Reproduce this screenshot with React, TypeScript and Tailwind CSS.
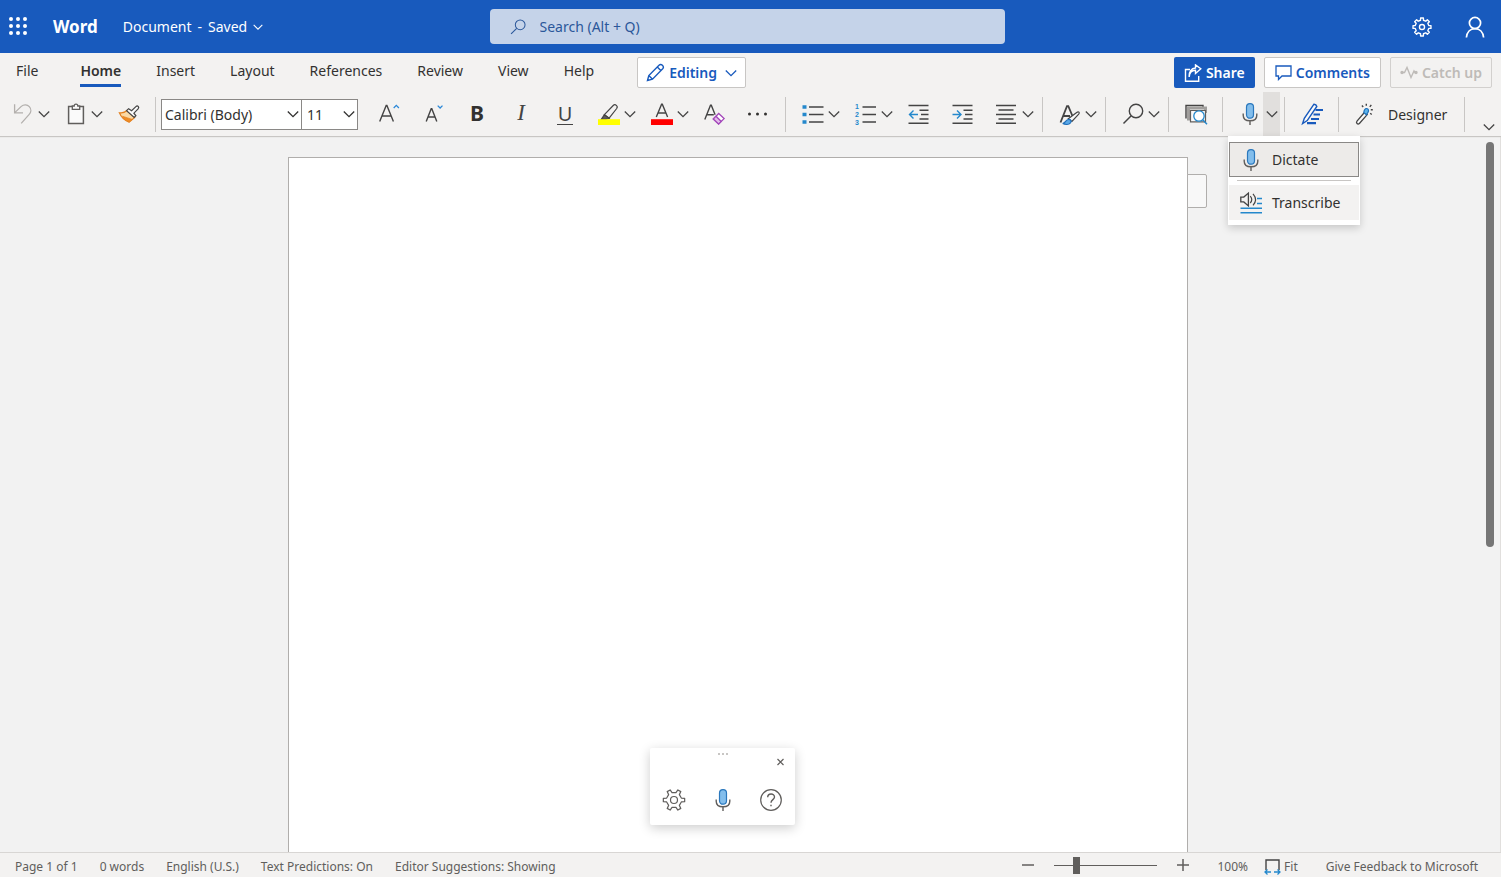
import React from 'react';

type IconProps = { children: React.ReactNode; size?: number };

// Shared wrapper, every ribbon icon is drawn on a 22px grid
const Icon: React.FC<IconProps> = ({ children, size = 22 }) => (
  <svg width={size} height={size} viewBox="0 0 22 22" fill="none" stroke="#444" strokeWidth="1.2" aria-hidden="true" className="shrink-0 overflow-visible">
    {children}
  </svg>
);

const Chevron: React.FC<{ size?: number }> = ({ size = 12 }) => (
  <svg width={size} height={size} viewBox="0 0 12 12" fill="none" stroke="currentColor" strokeWidth="1.3" aria-hidden="true" className="shrink-0">
    <path d="M.8 3.5 6 8.7l5.2-5.2" />
  </svg>
);

const MicIcon = () => (
  <Icon>
    <rect x="7.5" y="0.6" width="7" height="14.6" rx="3.4" fill="#83beec" stroke="#2b78bd" />
    <path d="M4.2 10.5v1.7c0 3.4 2.6 5.6 6.8 5.6s6.8-2.2 6.8-5.6v-1.7M11 17.8V22" stroke="#605e5c" strokeWidth="1.4" />
  </Icon>
);

const UndoIcon = () => (
  <Icon>
    <path d="M2.6 1.2v8.6h8.4M2.8 9.6 9.3 3.4c2.5-2.3 6-2 8 .2 2.2 2.4 2 5.7-.3 8L9.2 20.4" stroke="#b3b0ad" strokeWidth="1.3" />
  </Icon>
);

const PasteIcon = () => (
  <Icon>
    <path d="M7.3 3.4H3.6v17.2h14.8V3.4h-3.7" stroke="#605e5c" strokeWidth="1.5" fill="#fafafa" />
    <path d="M7.3 6.4V3h1.9c0-2.6 3.6-2.6 3.6 0h1.9v3.4z" stroke="#605e5c" strokeWidth="1.3" fill="#fafafa" />
  </Icon>
);

const FormatPainterIcon = () => (
  <Icon>
    <path d="M1.4 9.8c3.2.6 5.8-.5 7.9-2.5l7.4 7.2-5.5 4.6C7 17.6 3.4 14.8 1.4 9.8z" fill="#fbd9a5" stroke="#e3801f" />
    <path d="m4.5 13.2 9.8 3.2-3.1 2.7c-3-1.1-5.2-3-6.7-5.9z" fill="#f08c25" stroke="#e3801f" strokeWidth=".6" />
    <path d="m8.6 7.7 2-2 3 2.1 4.3-4.2c1.7-1.6 3.8.5 2.2 2.2l-4.2 4.4 2 2.6-1.7 1.7z" fill="#fafafa" />
  </Icon>
);

const GrowFontIcon = () => (
  <Icon>
    <path d="m1.7 18.5 6.5-16h.7l6.5 16M4 13h9" strokeWidth="1.4" />
    <path d="m15.7 5 2.6-2.6L20.9 5" stroke="#2b88d8" strokeWidth="1.3" />
  </Icon>
);

const ShrinkFontIcon = () => (
  <Icon>
    <path d="m4.2 18.500 5-12.800h.6l5 12.800M6 14h7" strokeWidth="1.4" />
    <path d="m15.7 2.600 2.400 2.400 2.400-2.400" stroke="#2b88d8" strokeWidth="1.3" />
  </Icon>
);

const HighlightIcon = () => (
  <Icon>
    <path d="m6.4 11.7 8.8-9.2c2-2 5.2.6 3.5 3l-7.6 9.7z" />
    <path d="m6.4 11.7 4.7 3.5-3.4 1.1H3.3z" fill="#605e5c" />
    <path d="M0 16.2h22V22H0z" fill="#ff0" stroke="none" />
  </Icon>
);

const FontColorIcon = () => (
  <Icon>
    <path d="m5.3 14 5.3-12.8h.7L16.6 14M7.2 10h7.6" strokeWidth="1.4" />
    <path d="M0 16.2h22V22H0z" fill="red" stroke="none" />
  </Icon>
);

const ClearFormatIcon = () => (
  <Icon>
    <path d="M.8 16.6 6.500 2.200h.8l3.800 9.600M2.800 11.800h7" strokeWidth="1.4" />
    <path d="m9.3 16 5.400-5.500 5.400 5.100-5.500 5.400z" fill="#fff" stroke="#a347ba" strokeWidth="1.3" />
    <path d="m11.9 13.300 5.300 5.200" stroke="#a347ba" strokeWidth="1.3" />
    <path d="m11.9 13.300 5.300 5.200-2.600 2.500-5.300-5z" fill="#e3bdeb" stroke="none" />
    <path d="m9.3 16 5.300 5 2.600-2.500-5.300-5.200z" stroke="#a347ba" strokeWidth="1.1" />
  </Icon>
);

const BulletsIcon = () => (
  <Icon>
    <path d="M7 4h14.500M7 11.500h14.500M7 19h14.500" strokeWidth="1.4" />
    <path d="M.5 2.200h4v3.600h-4zM.5 9.700h4v3.600h-4zM.5 17.200h4v3.600h-4z" fill="#2488cc" stroke="none" />
  </Icon>
);

const NumberingIcon = () => (
  <Icon>
    <path d="M7.500 4H21M7.500 11.500H21M7.500 19H21" strokeWidth="1.4" />
    <g fill="#2488cc" stroke="none" fontSize="7" fontWeight="700" fontFamily="Liberation Sans, sans-serif">
      <text x="0" y="6">1</text>
      <text x="0" y="14">2</text>
      <text x="0" y="22">3</text>
    </g>
  </Icon>
);

const IndentIcon: React.FC<{ outdent?: boolean }> = ({ outdent }) => (
  <Icon>
    <path d="M.5 2.500h20M11.500 7.300h9M13 11.500h7.500M11.500 16h9M.5 20.300h20" strokeWidth="1.4" />
    {outdent
      ? <path d="M10 11.500H1.500M5.500 7.500l-4 4 4 4" stroke="#2488cc" strokeWidth="1.4" />
      : <path d="M.5 11.500H9M5 7.500l4 4-4 4" stroke="#2488cc" strokeWidth="1.4" />}
  </Icon>
);

const AlignIcon = () => (
  <Icon>
    <path d="M0 2.500h20M2.500 7h15M0 11.500h20M2.500 16h15M0 20.300h20" strokeWidth="1.4" />
  </Icon>
);

const StylesIcon = () => (
  <Icon>
    <path d="M1.5 19.5 8 3.2h1.3l4.4 10.3M4 13h7" strokeWidth="1.8" />
    <path d="m9.3 15.8 8.4-6.4c2-1.4 3.3.3 2 1.8l-6.8 7.2z" fill="#fafafa" />
    <path d="M3.700 20.400c2.600.2 2.600-3.400 5.600-3.900 2.400-.3 3.600 1.600 2.200 3.300-1.700 1.900-5.200 2-7.800.6z" fill="#5aa7e6" stroke="#1e6fba" />
  </Icon>
);

const SearchIcon: React.FC<{ size?: number; stroke?: string }> = ({ size, stroke = '#444' }) => (
  <Icon size={size}>
    <circle cx="14" cy="8" r="6.7" stroke={stroke} strokeWidth="1.4" />
    <path d="M9.2 12.800 1.500 20.500" stroke={stroke} strokeWidth="1.5" />
  </Icon>
);

const ReuseIcon = () => (
  <Icon>
    <path d="M1 15.500V2.500h17v2" strokeWidth="1.4" />
    <path d="M3.500 17.500V5h17v5" stroke="#a19f9d" strokeWidth="3" />
    <path d="M5.500 7.500h15v11.300h-15z" fill="#fafafa" stroke="#605e5c" />
    <circle cx="14" cy="13" r="5.200" fill="#fff" stroke="#2488cc" strokeWidth="1.3" />
    <path d="m17.800 16.800 4.200 4.400" stroke="#2488cc" strokeWidth="1.5" />
  </Icon>
);

const EditorIcon = () => (
  <Icon>
    <path d="M13 1.200 3.300 15.400l-1.700 5.100 4.600-2.900L15.800 3.500c-.3-1.300-1.400-2.200-2.800-2.300z" fill="#fafafa" stroke="#185abd" strokeWidth="1.4" />
    <path d="M14.500 7h7.500M12.500 11.500h6.500M10 16h8M6 20.200h9" stroke="#185abd" strokeWidth="2.200" />
  </Icon>
);

const WandIcon = () => (
  <Icon>
    <path d="m10.600 9.300 2.600 2.300-7.800 8.900c-1.700 1.400-3.800-.6-2.400-2.300z" fill="#fafafa" strokeWidth="1.3" />
    <path d="M9.800 9.600c.3-2.600 1-4.200 2.800-4.100 2 .2 2.400 2.400 1.400 3.800l-1.600 2.500z" fill="#5db4ea" stroke="#1e6fba" />
    <path d="M12.300.8v2M7.900 2.500l1.300 1.400M17.300 1.800l-1.500 2M16.800 6.800h2M16.200 10.300l1.500 1.200" strokeWidth="1.4" />
  </Icon>
);

const TranscribeIcon = () => (
  <Icon>
    <path d="M.8 5.100h3l4.600-4v12.800l-4.600-4h-3z" strokeWidth="1.3" />
    <path d="M10.300 4.200c1.700 2 1.700 4.800 0 6.800M13 1.800c3.100 3.500 3.100 8 0 11.600" />
    <path d="M17 6.500h5M17 11.500h5M.5 16.200H22M.5 20.800H22" stroke="#2488cc" strokeWidth="1.4" />
  </Icon>
);

// Outline of a cog centred on the icon grid
const cog = (teeth: number, outer: number, inner: number, tip: number, root: number) => {
  const points: string[] = [];
  for (let i = 0; i < teeth; i++) {
    const mid = (360 / teeth) * i;
    [[-root, inner], [-tip, outer], [tip, outer], [root, inner]].forEach(([offset, radius]) => {
      const angle = ((mid + offset) * Math.PI) / 180;
      points.push(`${(11 + radius * Math.cos(angle)).toFixed(2)},${(11 + radius * Math.sin(angle)).toFixed(2)}`);
    });
  }
  return points.join(' ');
};

const SettingsIcon = () => (
  <Icon>
    <polygon points={cog(6, 10.8, 7.6, 9, 15)} strokeLinejoin="round" stroke="#605e5c" />
    <circle cx="11" cy="11" r="3.5" stroke="#605e5c" />
  </Icon>
);

const GearIcon = () => (
  <Icon size={20}>
    <polygon points={cog(8, 10, 7.6, 9, 12)} strokeLinejoin="round" stroke="#fff" strokeWidth="1.5" />
    <circle cx="11" cy="11" r="2.8" stroke="#fff" strokeWidth="1.5" />
  </Icon>
);

const ToolButton: React.FC<{ label: string; children: React.ReactNode }> = ({ label, children }) => (
  <button aria-label={label} className="flex w-11 shrink-0 items-center justify-center">{children}</button>
);

const SplitButton: React.FC<{ label: string; children: React.ReactNode }> = ({ label, children }) => (
  <div className="flex shrink-0 pl-[11px] text-[#444]">
    <button aria-label={label} className="flex w-[22px] items-center justify-center">{children}</button>
    <button aria-label={`${label} options`} className="flex w-5 items-center justify-center">
      <Chevron />
    </button>
  </div>
);

const Divider = () => <div className="mr-[5px] ml-1 h-[35px] w-px shrink-0 self-center bg-[#c8c6c4]" />;

const tabs = ['Insert', 'Layout', 'References', 'Review', 'View', 'Help'];

const TitleBar = () => (
  <header className="flex h-[53px] shrink-0 items-center bg-[#185abd] text-white">
    <div className="flex flex-1 items-center pl-2">
      <button aria-label="App launcher">
        <svg width="20" height="20" viewBox="0 0 20 20" fill="#fff" aria-hidden="true">
          {[3, 10, 17].map(y => [3, 10, 17].map(x => <circle key={`${x}-${y}`} cx={x} cy={y - 1} r="2" />))}
        </svg>
      </button>
      <h1 className="ml-[25px] text-[17px] font-bold">Word</h1>
      <button className="ml-[25px] flex items-center gap-1.5 text-sm">
        <span>Document</span>
        <span>-</span>
        <span>Saved</span>
        <Chevron size={10} />
      </button>
    </div>
    <label className="flex h-[35px] w-[515px] items-center gap-3.5 rounded bg-[#c5d3e9] px-5">
      <SearchIcon size={16} stroke="#2b579a" />
      <input
        type="search"
        aria-label="Search"
        placeholder="Search (Alt + Q)"
        className="min-w-0 flex-1 bg-transparent text-sm text-[#2b579a] outline-none placeholder:text-[#2b579a]"
      />
    </label>
    <div className="flex flex-1 items-center justify-end gap-8 pr-[15px]">
      <button aria-label="Settings"><GearIcon /></button>
      <button aria-label="Account">
        <Icon>
          <circle cx="11" cy="7" r="5.6" stroke="#fff" strokeWidth="1.7" />
          <path d="M2.400 21.500c.5-5.400 3.800-8.900 8.600-8.900s8.100 3.500 8.600 8.900" stroke="#fff" strokeWidth="1.7" />
        </Icon>
      </button>
    </div>
  </header>
);

const TabRow = () => (
  <div className="flex h-[39px] items-start pt-1 pr-[9px] pl-4">
    <nav className="flex gap-[35px] text-sm leading-[27px]">
      <button className="mr-[7px] h-[30px] pb-[3px]">File</button>
      <button className="h-[30px] border-b-3 border-[#185abd] font-semibold">Home</button>
      {tabs.map(tab => (
        <button key={tab} className="h-[30px] pb-[3px]">{tab}</button>
      ))}
    </nav>
    <button className="ml-[43px] flex h-[31px] items-center gap-1 rounded-xs border border-[#c8c6c4] bg-white px-2 text-sm font-semibold text-[#185abd]">
      <svg width="19" height="19" viewBox="0 0 19 19" fill="none" stroke="currentColor" strokeWidth="1.4" aria-hidden="true">
        <path d="m1.500 17.500 1.300-5L13 2.200c2.200-2 5.700 1.200 3.700 3.500L6.500 16.200zM11.300 4l3.700 3.700M2.800 12.500l3.700 3.700" />
      </svg>
      Editing
      <span className="ml-1 flex"><Chevron /></span>
    </button>
    <div className="ml-auto flex gap-[9px] text-sm font-semibold">
      <button className="flex h-[31px] items-center gap-1 rounded-xs bg-[#185abd] px-2.5 text-white">
        <svg width="18" height="18" viewBox="0 0 18 18" fill="none" stroke="currentColor" strokeWidth="1.4" aria-hidden="true">
          <path d="M6 5.500H1.500v11.700h13.200V12M5.200 13c.2-4.300 2.700-6.600 6.300-6.700v3.200l5.300-4.700L11.500.9V4C7.300 4.300 4.800 7.500 5.200 13z" />
        </svg>
        Share
      </button>
      <button className="flex h-[31px] items-center gap-1 rounded-xs border border-[#c8c6c4] bg-white px-2.5 text-[#185abd]">
        <svg width="17" height="17" viewBox="0 0 17 17" fill="none" stroke="currentColor" strokeWidth="1.3" aria-hidden="true">
          <path d="M1 2h15v10H7l-3.500 3.500V12H1z" />
        </svg>
        Comments
      </button>
      <button disabled className="flex h-[31px] items-center gap-1 rounded-xs border border-[#d2d0ce] px-[9px] text-[#bebbb8]">
        <svg width="18" height="16" viewBox="0 0 18 16" fill="none" stroke="currentColor" strokeWidth="1.4" aria-hidden="true">
          <path d="M2 7.500h2.500L7 2.500l4 10 3-6.500 1 1.500h1" />
          <circle cx="2" cy="7.5" r="1" fill="currentColor" />
          <circle cx="16" cy="7.5" r="1" fill="currentColor" />
        </svg>
        Catch up
      </button>
    </div>
  </div>
);

const DictateMenu = () => (
  <div role="menu" className="absolute top-full left-0 z-10 w-[132px] bg-white px-px pt-1.5 pb-[5px] text-sm shadow-[0_3px_8px_rgba(0,0,0,0.18)]">
    <button role="menuitem" className="flex h-[35px] w-full items-center gap-2.5 border border-[#8a8886] bg-[#edebe9] pl-2.5">
      <MicIcon />
      Dictate
    </button>
    <hr className="mx-2 mt-[3px] mb-1 border-[#c8c6c4]" />
    <button role="menuitem" className="flex h-[35px] w-full items-center gap-2.5 bg-[#f3f2f1] pl-[11px]">
      <TranscribeIcon />
      Transcribe
    </button>
  </div>
);

const Toolbar = () => (
  <div className="flex h-11 pl-px">
    <SplitButton label="Undo"><UndoIcon /></SplitButton>
    <SplitButton label="Paste"><PasteIcon /></SplitButton>
    <ToolButton label="Format painter"><FormatPainterIcon /></ToolButton>
    <Divider />
    <div className="mr-[9px] flex items-center text-sm">
      <div className="relative">
        <select aria-label="Font" className="h-[31px] w-[141px] appearance-none border border-[#8a8886] bg-white pt-0.5 pl-[3px]">
          <option>Calibri (Body)</option>
        </select>
        <span className="pointer-events-none absolute top-[9px] right-[3px]"><Chevron /></span>
      </div>
      <div className="relative">
        <select aria-label="Font size" className="h-[31px] w-14 appearance-none border border-l-0 border-[#8a8886] bg-white pt-0.5 pl-[5px]">
          <option>11</option>
        </select>
        <span className="pointer-events-none absolute top-[9px] right-[3px]"><Chevron /></span>
      </div>
    </div>
    <ToolButton label="Grow font"><GrowFontIcon /></ToolButton>
    <ToolButton label="Shrink font"><ShrinkFontIcon /></ToolButton>
    <ToolButton label="Bold"><span className="pb-0.5 text-[21px] leading-[22px] font-bold">B</span></ToolButton>
    <ToolButton label="Italic"><span className="pb-0.5 font-['Liberation_Serif',serif] text-[23px] leading-[22px] text-[#444] italic">I</span></ToolButton>
    <ToolButton label="Underline"><span className="border-b border-[#444] px-px text-[20px] leading-5 text-[#444]">U</span></ToolButton>
    <SplitButton label="Highlight"><HighlightIcon /></SplitButton>
    <SplitButton label="Font color"><FontColorIcon /></SplitButton>
    <ToolButton label="Clear formatting"><ClearFormatIcon /></ToolButton>
    <ToolButton label="More font options">
      <Icon>
        <path d="M0 11a1.500 1.500 0 1 0 3 0 1.500 1.500 0 1 0-3 0M8 11a1.500 1.500 0 1 0 3 0 1.500 1.500 0 1 0-3 0M16 11a1.500 1.500 0 1 0 3 0 1.500 1.500 0 1 0-3 0" fill="#323130" stroke="none" />
      </Icon>
    </ToolButton>
    <Divider />
    <SplitButton label="Bullets"><BulletsIcon /></SplitButton>
    <SplitButton label="Numbering"><NumberingIcon /></SplitButton>
    <ToolButton label="Decrease indent"><IndentIcon outdent /></ToolButton>
    <ToolButton label="Increase indent"><IndentIcon /></ToolButton>
    <SplitButton label="Alignment"><AlignIcon /></SplitButton>
    <Divider />
    <SplitButton label="Styles"><StylesIcon /></SplitButton>
    <Divider />
    <SplitButton label="Find"><SearchIcon /></SplitButton>
    <Divider />
    <ToolButton label="Reuse files"><ReuseIcon /></ToolButton>
    <Divider />
    <div className="relative flex gap-0.5 pl-[11px]">
      <button aria-label="Dictate" className="flex w-[22px] items-center"><MicIcon /></button>
      <button aria-label="Dictate options" aria-expanded="true" className="flex w-[17px] items-center justify-center bg-[#e1dfdd] text-[#444]">
        <Chevron />
      </button>
      <DictateMenu />
    </div>
    <Divider />
    <ToolButton label="Editor"><EditorIcon /></ToolButton>
    <Divider />
    <button className="mr-[13px] flex shrink-0 items-center gap-3 pl-2.5 text-sm">
      <WandIcon />
      <span className="pt-0.5">Designer</span>
    </button>
    <Divider />
    <button aria-label="Ribbon display options" className="mr-1.5 ml-auto flex items-end pb-[3px] text-[#444]">
      <Chevron />
    </button>
  </div>
);

const DictationPanel = () => (
  <section aria-label="Dictation" className="absolute bottom-[27px] left-[650px] w-[145px] rounded-xs bg-white pb-3.5 shadow-[0_3px_12px_rgba(0,0,0,0.2)]">
    <div className="flex h-[41px] flex-col items-center pt-1">
      <svg width="12" height="4" viewBox="0 0 12 4" fill="#c8c6c4" aria-hidden="true">
        <path d="M1 1h2v2H1zM5 1h2v2H5zM9 1h2v2H9z" />
      </svg>
      <button aria-label="Close" className="mr-2.5 self-end">
        <svg width="9" height="11" viewBox="0 0 9 11" fill="none" stroke="#605e5c" strokeWidth="1.2" aria-hidden="true">
          <path d="m1.500 3 6 6M7.500 3l-6 6" />
        </svg>
      </button>
    </div>
    <div className="flex justify-between px-[13px]">
      <button aria-label="Dictation settings"><SettingsIcon /></button>
      <button aria-label="Toggle microphone"><MicIcon /></button>
      <button aria-label="Help">
        <Icon>
          <circle cx="11" cy="11" r="10.3" stroke="#605e5c" />
          <path d="M7.700 8.300c0-4.400 6.800-4.300 6.800-.3 0 2.600-3.500 2.700-3.500 5.800M11 15.700v1.600" stroke="#605e5c" strokeWidth="1.4" />
        </Icon>
      </button>
    </div>
  </section>
);

const StatusBar = () => (
  <footer className="flex h-[25px] shrink-0 items-center justify-between border-t border-[#d8d6d4] bg-[#f3f2f1] pt-1 pr-[23px] pl-[15px] text-xs text-[#605e5c]">
    <div className="flex gap-[22px]">
      <button>Page 1 of 1</button>
      <button>0 words</button>
      <button>English (U.S.)</button>
      <button>Text Predictions: On</button>
      <button>Editor Suggestions: Showing</button>
    </div>
    <div className="flex items-center">
      <div className="flex items-center pb-1">
        <button aria-label="Zoom out">
          <svg width="12" height="12" viewBox="0 0 12 12" stroke="#605e5c" strokeWidth="1.5" aria-hidden="true"><path d="M0 6h12" /></svg>
        </button>
        <input
          type="range"
          aria-label="Zoom"
          defaultValue={20}
          className="mx-5 h-[18px] w-[103px] appearance-none bg-transparent [&::-webkit-slider-runnable-track]:h-px [&::-webkit-slider-runnable-track]:bg-[#605e5c] [&::-webkit-slider-thumb]:mt-[-8px] [&::-webkit-slider-thumb]:h-[17px] [&::-webkit-slider-thumb]:w-[7px] [&::-webkit-slider-thumb]:appearance-none [&::-webkit-slider-thumb]:bg-[#605e5c]"
        />
        <button aria-label="Zoom in">
          <svg width="12" height="12" viewBox="0 0 12 12" stroke="#605e5c" strokeWidth="1.5" aria-hidden="true"><path d="M0 6h12M6 0v12" /></svg>
        </button>
      </div>
      <button className="ml-[29px]">100%</button>
      <button className="ml-4 flex items-center gap-[3px]">
        <svg width="17" height="17" viewBox="0 0 17 17" fill="none" aria-hidden="true">
          <path d="M2 11V1h13v10" stroke="#444" strokeWidth="1.4" />
          <path d="M7 13H1M3.500 10.500 1 13l2.500 2.500M10 13h6M13.500 10.500 16 13l-2.500 2.500" stroke="#2488cc" strokeWidth="1.3" />
        </svg>
        Fit
      </button>
      <a href="#feedback" className="ml-7">Give Feedback to Microsoft</a>
    </div>
  </footer>
);

const App: React.FC = () => (
  <div className="flex h-screen flex-col overflow-hidden bg-[#f2f2f2] font-['Noto_Sans','Open_Sans',sans-serif] text-[#323130]">
    <TitleBar />
    <div className="relative z-10 shrink-0 bg-[#f3f2f1] shadow-[0_1px_1px_#c8c6c4]">
      <TabRow />
      <Toolbar />
    </div>

    {/* Document canvas */}
    <main className="relative flex min-h-0 flex-1">
      <div className="flex flex-1 justify-center pt-[21px]">
        <div className="relative w-[900px] border border-b-0 border-[#b0aeac] bg-white">
          <div className="absolute top-4 left-full h-[34px] w-5 rounded-r-xs border border-[#b0aeac] bg-[#f8f8f8]" />
        </div>
      </div>
      <div className="w-[25px] border-r border-[#e1dfdd] pt-1.5 pl-2.5">
        <div className="h-[57%] w-2 rounded-full bg-[#767676]" />
      </div>
      <DictationPanel />
    </main>
    <StatusBar />
  </div>
);

export default App;
